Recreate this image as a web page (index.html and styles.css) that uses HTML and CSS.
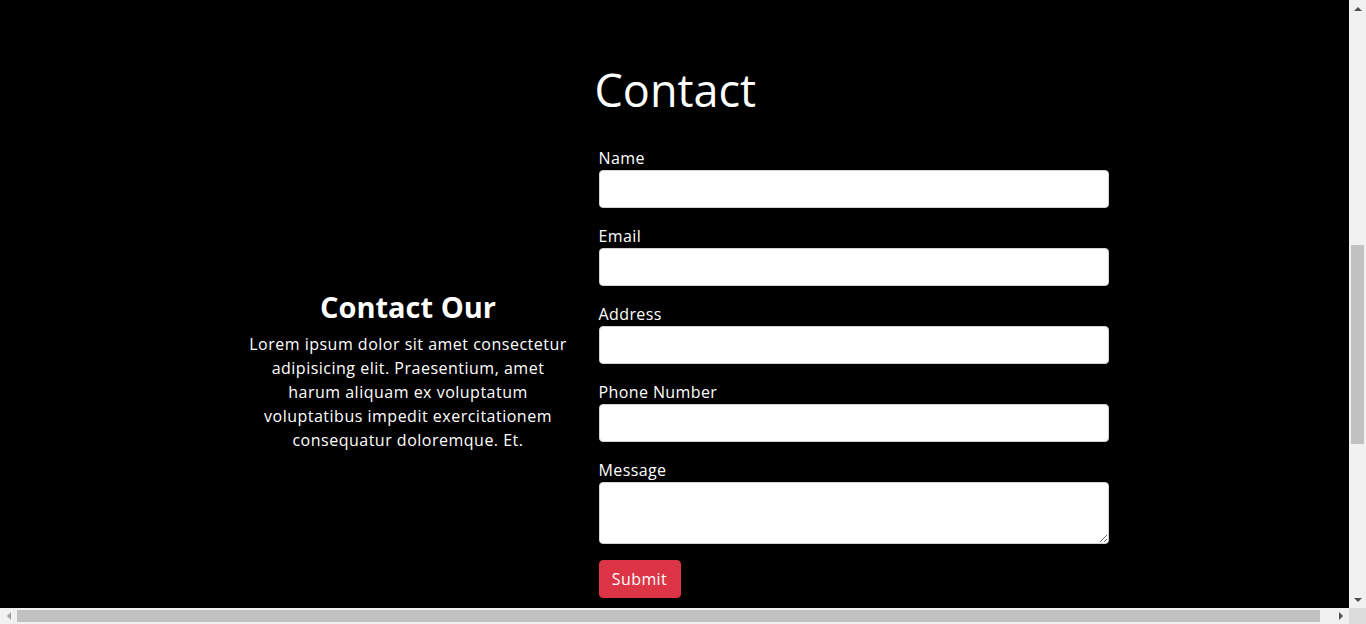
FILE: index.html
```html
<!DOCTYPE html>
<html lang="en">
<head>
<meta charset="utf-8">
<title>Contact</title>
<link rel="stylesheet" href="styles.css">
</head>
<body>
<section class="contact">
  <div class="about">
    <h2 class="about-title">Contact Our</h2>
    <p class="about-text">Lorem ipsum dolor sit amet consectetur adipisicing elit. Praesentium, amet harum aliquam ex voluptatum voluptatibus impedit exercitationem consequatur doloremque. Et.</p>
  </div>
  <div class="form-col">
    <h1 class="title">Contact</h1>
    <form class="form">
      <div class="field">
        <label class="label" for="name">Name</label>
        <input class="control" id="name" type="text">
      </div>
      <div class="field">
        <label class="label" for="email">Email</label>
        <input class="control" id="email" type="email">
      </div>
      <div class="field">
        <label class="label" for="address">Address</label>
        <input class="control" id="address" type="text">
      </div>
      <div class="field">
        <label class="label" for="phone">Phone Number</label>
        <input class="control" id="phone" type="tel">
      </div>
      <div class="field">
        <label class="label" for="message">Message</label>
        <textarea class="control area" id="message" rows="2"></textarea>
      </div>
      <button class="submit" type="button">Submit</button>
    </form>
  </div>
</section>
<div class="vscroll" aria-hidden="true">
  <span class="sbtn"><span class="arr arr-up"></span></span>
  <span class="vtrack"><span class="vthumb"></span></span>
  <span class="sbtn"><span class="arr arr-down"></span></span>
</div>
<div class="hscroll" aria-hidden="true">
  <span class="sbtn sbtn-h"><span class="arr arr-left"></span></span>
  <span class="htrack"><span class="hthumb"></span></span>
  <span class="sbtn sbtn-h"><span class="arr arr-right"></span></span>
</div>
<div class="corner" aria-hidden="true"></div>
</body>
</html>
```

FILE: styles.css
```css
html, body {
  margin: 0;
  padding: 0;
  background: #000;
}
body {
  padding-right: 17px;
  color: #fff;
  font-family: "Open Sans", "DejaVu Sans", sans-serif;
  font-size: 16px;
  line-height: 24px;
}
.contact {
  display: flex;
  justify-content: center;
  align-items: flex-start;
  gap: 23px;
  padding: 61px 0 62px;
}
.about {
  box-sizing: border-box;
  width: 335px;
  padding: 229px 6px 0;
  text-align: center;
}
.about-title {
  margin: 0 0 8px;
  font-size: 29px;
  line-height: 34px;
  font-weight: 700;
}
.about-text {
  margin: 0;
  font-size: 16px;
  line-height: 24px;
  letter-spacing: 0.5px;
}
.form-col {
  width: 510px;
}
.title {
  margin: 0 0 27px -4px;
  font-size: 45px;
  line-height: 58px;
  font-weight: 400;
}
.form {
  display: flex;
  flex-direction: column;
}
.field {
  display: flex;
  flex-direction: column;
  margin-bottom: 16px;
}
.label {
  display: block;
  height: 24px;
  font-size: 16px;
  line-height: 24px;
  letter-spacing: 0.4px;
}
.control {
  box-sizing: border-box;
  width: 100%;
  height: 38px;
  margin: 0;
  padding: 6px 12px;
  border: 1px solid #ced4da;
  border-radius: 4px;
  background: #fff;
  font: inherit;
  color: #212529;
}
.area {
  height: 62px;
  resize: vertical;
  display: block;
}
.submit {
  align-self: flex-start;
  box-sizing: border-box;
  width: 82px;
  height: 38px;
  padding: 0;
  border: 1px solid #dc3545;
  border-radius: 4px;
  background: #dc3545;
  color: #fff;
  font: inherit;
  font-size: 16px;
  letter-spacing: 0.4px;
}

/* window scrollbars */
.vscroll {
  position: fixed;
  top: 0;
  right: 0;
  width: 17px;
  height: 608px;
  display: flex;
  flex-direction: column;
  background: #f1f1f1;
}
.hscroll {
  position: fixed;
  left: 0;
  bottom: 0;
  width: 1349px;
  height: 16px;
  display: flex;
  background: #f1f1f1;
}
.corner {
  position: fixed;
  right: 0;
  bottom: 0;
  width: 17px;
  height: 16px;
  background: #dcdcdc;
}
.sbtn {
  flex: 0 0 17px;
  height: 17px;
  display: flex;
  align-items: center;
  justify-content: center;
}
.sbtn-h {
  height: 16px;
}
.vtrack {
  flex: 1;
  display: flex;
  flex-direction: column;
  align-items: center;
}
.vthumb {
  width: 13px;
  height: 199px;
  margin-top: 228px;
  background: #c1c1c1;
}
.htrack {
  flex: 1;
  display: flex;
  align-items: center;
}
.hthumb {
  width: 1303px;
  height: 12px;
  background: #c1c1c1;
}
.arr {
  width: 0;
  height: 0;
}
.arr-up {
  border-left: 4px solid transparent;
  border-right: 4px solid transparent;
  border-bottom: 4px solid #505050;
}
.arr-down {
  border-left: 4px solid transparent;
  border-right: 4px solid transparent;
  border-top: 4px solid #505050;
}
.arr-left {
  border-top: 4px solid transparent;
  border-bottom: 4px solid transparent;
  border-right: 4px solid #a3a3a3;
}
.arr-right {
  border-top: 4px solid transparent;
  border-bottom: 4px solid transparent;
  border-left: 4px solid #505050;
}
```
